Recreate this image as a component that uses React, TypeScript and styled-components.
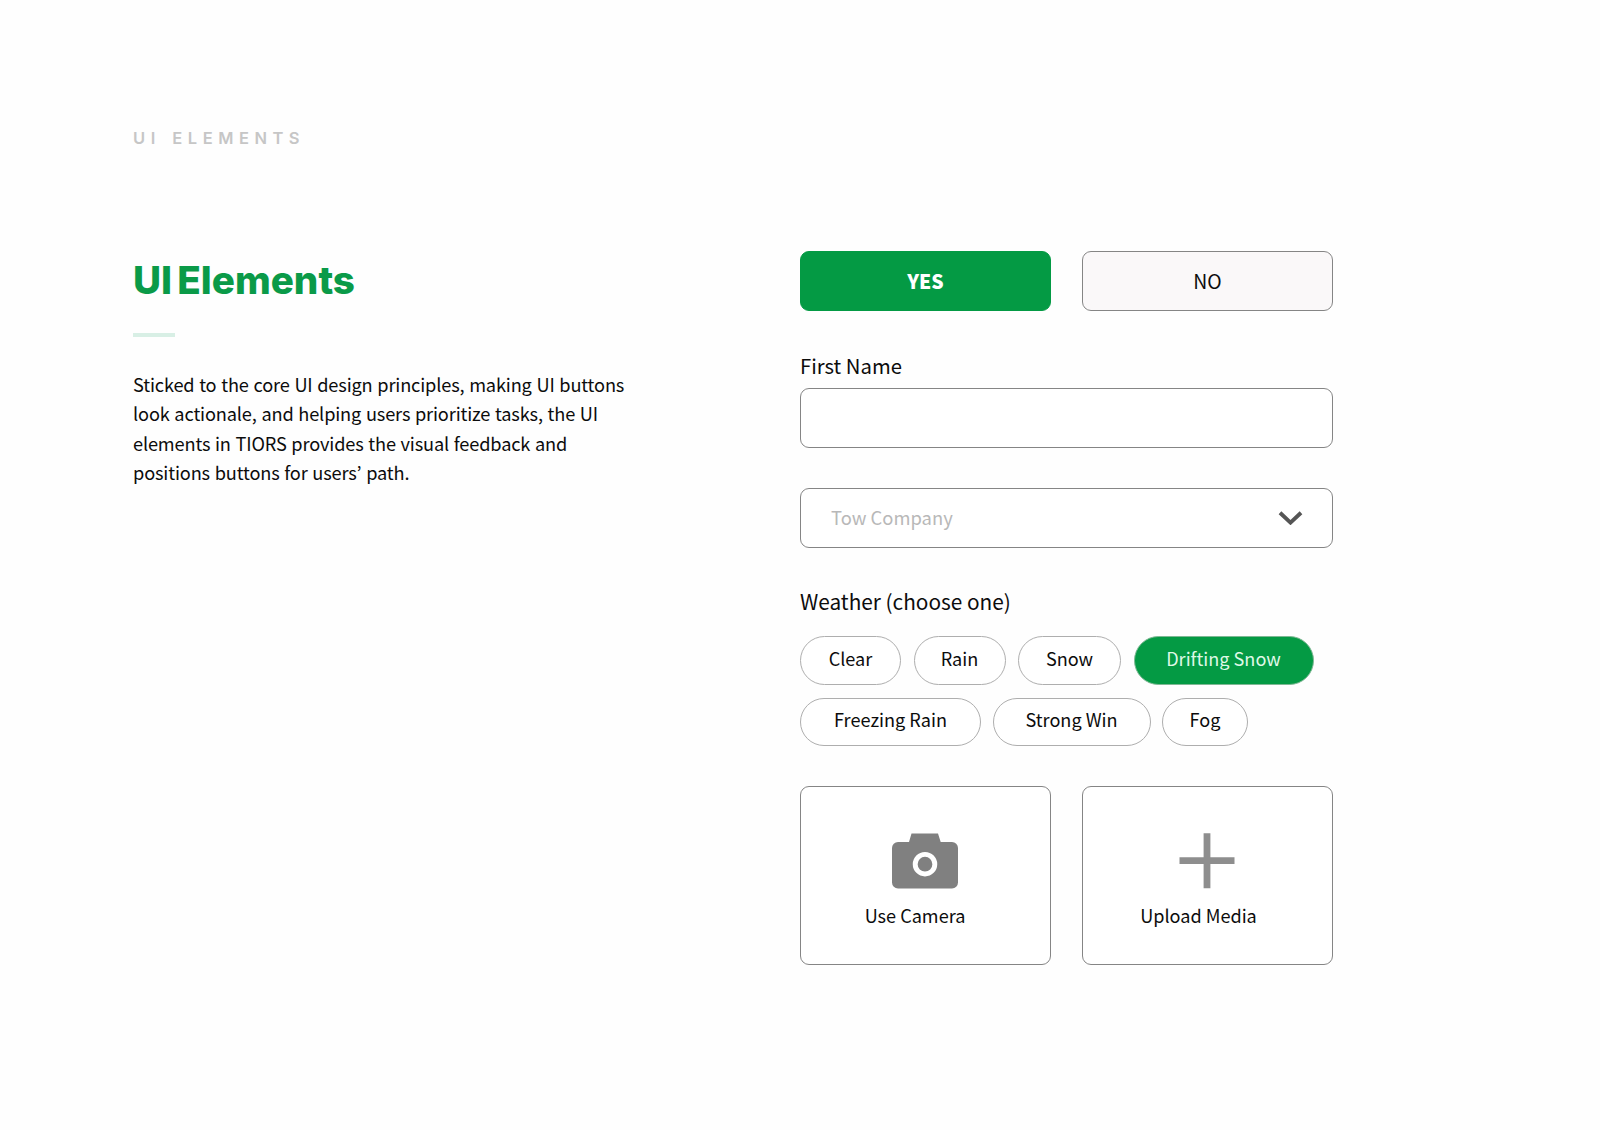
import React from "react";
import styled, { createGlobalStyle } from "styled-components";

const GlobalStyle = createGlobalStyle`
  * {
    box-sizing: border-box;
  }

  body {
    margin: 0;
    background: #fefefe;
    color: #0c0c0c;
    font-family: "Noto Sans CJK KR", "Noto Sans", sans-serif;
  }

  button,
  input {
    font-family: inherit;
    color: inherit;
    margin: 0;
  }
`;

const Page = styled.main`
  min-height: 1130px;
  padding: 128px 267px 0 133px;
`;

const Eyebrow = styled.div`
  font-family: Inter, sans-serif;
  font-size: 16.5px;
  font-weight: 600;
  line-height: 20px;
  letter-spacing: 5.5px;
  word-spacing: 2px;
  color: #c6c6c6;
`;

const Columns = styled.div`
  display: grid;
  grid-template-columns: 667px 533px;
  margin-top: 103px;
`;

const Intro = styled.section`
  padding-top: 4px;
`;

const Title = styled.h1`
  margin: 0;
  font-family: Inter, sans-serif;
  font-size: 38.6px;
  font-weight: 800;
  line-height: 50px;
  letter-spacing: 0;
  word-spacing: -3.2px;
  color: #0a9a48;
`;

const Divider = styled.div`
  width: 42px;
  height: 4px;
  margin-top: 28px;
  background: #d8efe5;
`;

const Paragraph = styled.p`
  width: 510px;
  margin: 32.6px 0 0;
  font-size: 18.2px;
  line-height: 29.6px;
  letter-spacing: -0.15px;
  word-spacing: 0.8px;
`;

const Form = styled.section`
  display: flex;
  flex-direction: column;
`;

const Split = styled.div`
  display: grid;
  grid-template-columns: 1fr 1fr;
  gap: 31px;
`;

const Button = styled.button<{ $primary?: boolean }>`
  height: 60px;
  padding: 0 0 1px;
  border: 1px solid ${(props) => (props.$primary ? "#049a44" : "#858585")};
  border-radius: 9px;
  background: ${(props) => (props.$primary ? "#049a44" : "#faf8f9")};
  color: ${(props) => (props.$primary ? "#fff" : "#0c0c0c")};
  font-size: 19.4px;
  font-weight: ${(props) => (props.$primary ? 900 : 400)};
`;

const Label = styled.label`
  margin-top: 39px;
  font-size: 20.3px;
  line-height: 30px;
`;

const GroupLabel = styled.div`
  margin-top: 38px;
  font-size: 20.8px;
  line-height: 30px;
`;

const Input = styled.input`
  height: 60px;
  margin-top: 8px;
  padding: 0 31px;
  border: 1px solid #858585;
  border-radius: 9px;
  background: #fff;
  font-size: 18.2px;
`;

const Select = styled.div`
  display: flex;
  align-items: center;
  justify-content: space-between;
  height: 60px;
  margin-top: 40px;
  padding: 0 29px 2px 30px;
  border: 1px solid #858585;
  border-radius: 9px;
  background: #fff;
  color: #b8b8b8;
  font-size: 18.4px;

  svg {
    margin-top: 2px;
  }
`;

const Chips = styled.div<{ $top: number; $gap: number }>`
  display: flex;
  gap: ${(props) => props.$gap}px;
  margin-top: ${(props) => props.$top}px;
`;

const Chip = styled.button<{ $width: number; $height: number; $active?: boolean }>`
  width: ${(props) => props.$width}px;
  height: ${(props) => props.$height}px;
  padding: 0 0 6px;
  border: 1px solid ${(props) => (props.$active ? "#7fb894" : "#aeaeae")};
  border-radius: 25px;
  background: ${(props) => (props.$active ? "#049a44" : "#fff")};
  color: ${(props) => (props.$active ? "#dff8e6" : "#0c0c0c")};
  font-size: 18.1px;
  white-space: nowrap;
`;

const Cards = styled(Split)`
  margin-top: 40px;
`;

const Card = styled.div`
  display: flex;
  flex-direction: column;
  align-items: center;
  height: 179px;
  padding-top: 46px;
  border: 1px solid #858585;
  border-radius: 9px;
  background: #fff;

  svg {
    margin-right: 2px;
  }
`;

const CardLabel = styled.span<{ $shift: number }>`
  margin-top: 11px;
  padding-right: ${(props) => props.$shift}px;
  font-size: 18.1px;
  line-height: 30px;
`;

const ChevronIcon = () => (
  <svg width="25" height="14" viewBox="0 0 25 14" fill="none">
    <path d="M2 1.8l10.5 9.8L23 1.8" stroke="#555" strokeWidth="3.9" />
  </svg>
);

const CameraIcon = () => (
  <svg width="66" height="56" viewBox="0 0 66 56">
    <path
      d="M19.5 0.5h26.5l2.7 8.5H60a6 6 0 0 1 6 6V49.5a6 6 0 0 1-6 6H6a6 6 0 0 1-6-6V15a6 6 0 0 1 6-6H17z"
      fill="#808080"
    />
    <circle cx="33" cy="31.2" r="9.8" fill="none" stroke="#fff" strokeWidth="4.9" />
  </svg>
);

const PlusIcon = () => (
  <svg width="56" height="56" viewBox="0 0 56 56">
    <path d="M28 0.2v55M0.5 27.7h55" stroke="#8e8e8e" strokeWidth="6.8" />
  </svg>
);

const App: React.FC = () => {
  return (
    <>
      <GlobalStyle />
      <Page>
        <Eyebrow>UI ELEMENTS</Eyebrow>
        <Columns>
          <Intro>
            <Title>UI Elements</Title>
            <Divider />
            <Paragraph>
              Sticked to the core UI design principles, making UI buttons
              <br />
              look actionale, and helping users prioritize tasks, the UI
              <br />
              elements in TIORS provides the visual feedback and
              <br />
              positions buttons for users’ path.
            </Paragraph>
          </Intro>
          <Form>
            <Split>
              <Button $primary>YES</Button>
              <Button>NO</Button>
            </Split>
            <Label htmlFor="first-name">First Name</Label>
            <Input id="first-name" />
            <Select>
              Tow Company
              <ChevronIcon />
            </Select>
            <GroupLabel>Weather (choose one)</GroupLabel>
            <Chips $top={20} $gap={12.5}>
              <Chip $width={101} $height={49}>Clear</Chip>
              <Chip $width={92} $height={49}>Rain</Chip>
              <Chip $width={103} $height={49}>Snow</Chip>
              <Chip $width={180} $height={49} $active>Drifting Snow</Chip>
            </Chips>
            <Chips $top={13} $gap={11.5}>
              <Chip $width={181} $height={48}>Freezing Rain</Chip>
              <Chip $width={158} $height={48}>Strong Win</Chip>
              <Chip $width={86} $height={48}>Fog</Chip>
            </Chips>
            <Cards>
              <Card>
                <CameraIcon />
                <CardLabel $shift={21}>Use Camera</CardLabel>
              </Card>
              <Card>
                <PlusIcon />
                <CardLabel $shift={18}>Upload Media</CardLabel>
              </Card>
            </Cards>
          </Form>
        </Columns>
      </Page>
    </>
  );
};

export default App;
